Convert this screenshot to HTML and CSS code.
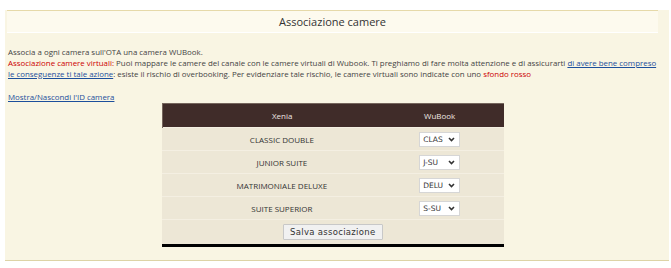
FILE: index.html
```html
<!DOCTYPE html>
<html lang="it">
<head>
  <meta charset="UTF-8">
  <title>Associazione camere</title>
  <link rel="stylesheet" href="styles.css">
</head>
<body>

  <div class="panel">
    <div class="panel-title">Associazione camere</div>

    <div class="intro">
      Associa a ogni camera sull'OTA una camera WUBook.<br>
      <span class="red">Associazione camere virtuali:</span> Puoi mappare le camere del canale con le camere virtuali di Wubook. Ti preghiamo di fare molta attenzione e di assicurarti <a href="#">di avere bene compreso le conseguenze ti tale azione</a>: esiste il rischio di overbooking. Per evidenziare tale rischio, le camere virtuali sono indicate con uno <span class="red">sfondo rosso</span>
    </div>

    <a href="#" class="toggle">Mostra/Nascondi l'ID camera</a>

    <div class="table-wrap">
      <table class="rooms">
        <tr>
          <th class="col-xenia">Xenia</th>
          <th class="col-wubook">WuBook</th>
          <th class="col-id"></th>
        </tr>
        <tr>
          <td>CLASSIC DOUBLE</td>
          <td><span class="pick">CLAS<svg width="7" height="5" viewBox="0 0 7 5"><path d="M1 1 L3.5 3.5 L6 1" fill="none" stroke="#333" stroke-width="1.6"/></svg></span></td>
          <td></td>
        </tr>
        <tr>
          <td>JUNIOR SUITE</td>
          <td><span class="pick">J-SU<svg width="7" height="5" viewBox="0 0 7 5"><path d="M1 1 L3.5 3.5 L6 1" fill="none" stroke="#333" stroke-width="1.6"/></svg></span></td>
          <td></td>
        </tr>
        <tr>
          <td>MATRIMONIALE DELUXE</td>
          <td><span class="pick">DELU<svg width="7" height="5" viewBox="0 0 7 5"><path d="M1 1 L3.5 3.5 L6 1" fill="none" stroke="#333" stroke-width="1.6"/></svg></span></td>
          <td></td>
        </tr>
        <tr>
          <td>SUITE SUPERIOR</td>
          <td><span class="pick">S-SU<svg width="7" height="5" viewBox="0 0 7 5"><path d="M1 1 L3.5 3.5 L6 1" fill="none" stroke="#333" stroke-width="1.6"/></svg></span></td>
          <td></td>
        </tr>
        <tr class="save-row">
          <td colspan="3"><button class="save">Salva associazione</button></td>
        </tr>
      </table>
    </div>
  </div>

</body>
</html>
```

FILE: styles.css
```css
body {
  margin: 0;
  background: #fff;
  font-family: "Open Sans", Arial, sans-serif;
  color: #3a3a3a;
}

.panel {
  margin: 10px 2px 0 5px;
  width: 664px;
  height: 251px;
  background: #f9f5e3;
  box-sizing: border-box;
  border-bottom: 1px solid #ddd3a6;
}

.panel-title {
  margin-left: 2px;
  width: 651px;
  height: 21px;
  border-top: 1px solid #e6d9a9;
  border-bottom: 1px solid #fff;
  background: #fdfaee;
  text-align: center;
  font-size: 11px;
  line-height: 21px;
  color: #333;
}

.intro {
  margin-top: 14px;
  padding-left: 3px;
  width: 652px;
  font-size: 7.9px;
  line-height: 11px;
  color: #444;
}

.red {
  color: #cc0000;
}

a {
  color: #1d4f9c;
}

.toggle {
  display: block;
  margin-top: 12px;
  padding-left: 3px;
  font-size: 7.9px;
  line-height: 11px;
  width: max-content;
}

.table-wrap {
  width: 651px;
  margin-left: 2px;
}

.rooms {
  margin: 0 auto;
  width: 342px;
  border-collapse: collapse;
  font-size: 8px;
  color: #333;
}

.rooms th {
  background: #402c29;
  color: #eee6e2;
  font-weight: normal;
  height: 23px;
  padding: 0;
  border-top: 1px solid #75655c;
}

.rooms th.col-xenia {
  border-left: 1px solid #75655c;
}

.col-xenia { width: 240px; }
.col-wubook { width: 76px; }
.col-id { width: 26px; }

.rooms td {
  background: #ede7d6;
  height: 22px;
  padding: 0;
  text-align: center;
  border-top: 1px solid #f4efe2;
}

.pick {
  display: inline-flex;
  align-items: center;
  justify-content: space-between;
  box-sizing: border-box;
  width: 41px;
  height: 15px;
  padding: 0 4px 0 3px;
  background: #fff;
  border: 1px solid #d6d6d6;
  font-family: "DejaVu Sans", Verdana, sans-serif;
  font-size: 7.5px;
  color: #333;
  vertical-align: middle;
}

.save-row td {
  height: 24px;
  border-bottom: 3px solid #000;
}

.save {
  height: 16px;
  width: 100px;
  padding: 0;
  background: #f1f1f1;
  border: 1px solid #c8c8c8;
  border-radius: 1px;
  font-family: "DejaVu Sans", Verdana, sans-serif;
  font-size: 8.5px;
  color: #333;
  letter-spacing: 0.3px;
  vertical-align: middle;
}
```
